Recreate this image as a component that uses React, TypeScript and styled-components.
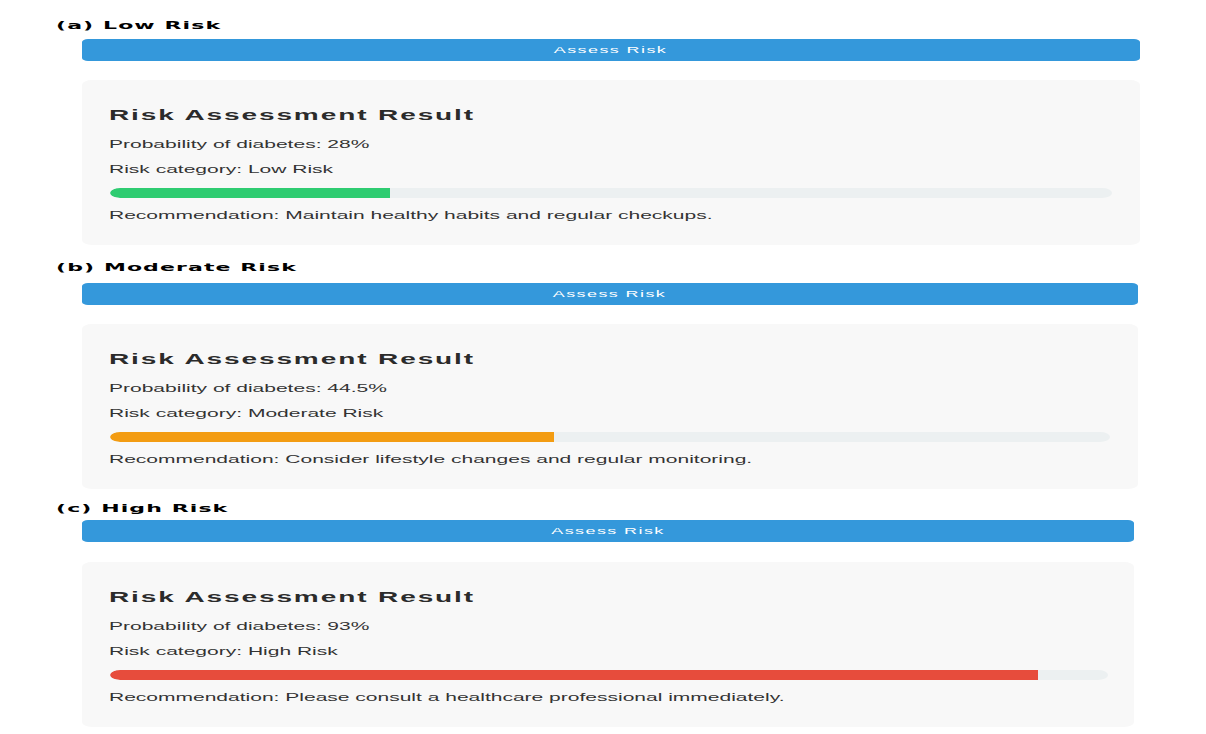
import React from 'react';
import styled, { createGlobalStyle } from 'styled-components';

// ─── Data ─────────────────────────────────────────────────────────────────────
interface Result {
  caption: string;
  probability: number;
  category: string;
  recommendation: string;
  color: string;
  top: number;
  lead: number;
  cardGap: number;
  inset: number;
  width: number;
}

const results: Result[] = [
  {
    caption: '(a) Low Risk',
    probability: 28,
    category: 'Low Risk',
    recommendation: 'Maintain healthy habits and regular checkups.',
    color: '#2ecc71',
    top: 0,
    lead: 6,
    cardGap: 19,
    inset: 41,
    width: 528.5,
  },
  {
    caption: '(b) Moderate Risk',
    probability: 44.5,
    category: 'Moderate Risk',
    recommendation: 'Consider lifestyle changes and regular monitoring.',
    color: '#f39c12',
    top: 16,
    lead: 8,
    cardGap: 19,
    inset: 41,
    width: 527.5,
  },
  {
    caption: '(c) High Risk',
    probability: 93,
    category: 'High Risk',
    recommendation: 'Please consult a healthcare professional immediately.',
    color: '#e74c3c',
    top: 13,
    lead: 4,
    cardGap: 20,
    inset: 41,
    width: 526,
  },
];

// ─── Styles ───────────────────────────────────────────────────────────────────
const GlobalStyle = createGlobalStyle`
  html, body {
    margin: 0;
    padding: 0;
    background: #ffffff;
    overflow: hidden;
  }
`;

// the figure was captured narrow and stretched sideways, so lay it out at half width
const Figure = styled.div`
  width: 603px;
  padding-top: 19px;
  display: flex;
  flex-direction: column;
  transform: scaleX(2);
  transform-origin: 0 0;
  font-family: 'Liberation Sans', Arial, sans-serif;
`;

const Panel = styled.section<{ $top: number }>`
  display: flex;
  flex-direction: column;
  margin-top: ${(p) => p.$top}px;
`;

const Caption = styled.div`
  padding-left: 28px;
  font-family: 'DejaVu Sans', sans-serif;
  font-weight: 700;
  font-size: 11px;
  line-height: 14px;
  letter-spacing: 0.55px;
  color: #000;
`;

const Body = styled.div<{ $lead: number; $cardGap: number; $inset: number; $width: number }>`
  display: flex;
  flex-direction: column;
  gap: ${(p) => p.$cardGap}px;
  margin-top: ${(p) => p.$lead}px;
  margin-left: ${(p) => p.$inset}px;
  width: ${(p) => p.$width}px;
`;

const AssessButton = styled.button`
  height: 22px;
  padding: 0;
  border: none;
  border-radius: 3px;
  background: #3498db;
  color: #fff;
  font-family: 'Liberation Sans', Arial, sans-serif;
  font-size: 9px;
  letter-spacing: 0.7px;
  cursor: pointer;
`;

const Card = styled.div`
  display: flex;
  flex-direction: column;
  gap: 12px;
  padding: 26.5px 13.5px 23px 13.5px;
  background: #f8f8f8;
  border-radius: 5px;
`;

const Title = styled.h3`
  margin: 0 0 3.5px;
  font-size: 14px;
  line-height: 16px;
  font-weight: 700;
  letter-spacing: 0.95px;
  color: #2b2b2b;
`;

const Line = styled.p`
  margin: 0;
  font-size: 10.5px;
  line-height: 13px;
  color: #333;
`;

const Recommendation = styled(Line)`
  margin-top: -1px;
`;

const Track = styled.div`
  height: 10px;
  border-radius: 5px;
  background: #ecf0f1;
  overflow: hidden;
`;

const Fill = styled.div<{ $color: string }>`
  height: 100%;
  background: ${(p) => p.$color};
  border-radius: 5px 0 0 5px;
`;

// ─── Component ────────────────────────────────────────────────────────────────
function ResultPanel({ r }: { r: Result }) {
  return (
    <Panel $top={r.top}>
      <Caption>{r.caption}</Caption>
      <Body $lead={r.lead} $cardGap={r.cardGap} $inset={r.inset} $width={r.width}>
        <AssessButton>Assess Risk</AssessButton>
        <Card>
          <Title>Risk Assessment Result</Title>
          <Line>Probability of diabetes: {r.probability}%</Line>
          <Line>Risk category: {r.category}</Line>
          <Track>
            <Fill $color={r.color} style={{ width: `${r.probability}%` }} />
          </Track>
          <Recommendation>Recommendation: {r.recommendation}</Recommendation>
        </Card>
      </Body>
    </Panel>
  );
}

export default function App() {
  return (
    <>
      <GlobalStyle />
      <Figure>
        {results.map((r) => (
          <ResultPanel key={r.caption} r={r} />
        ))}
      </Figure>
    </>
  );
}
